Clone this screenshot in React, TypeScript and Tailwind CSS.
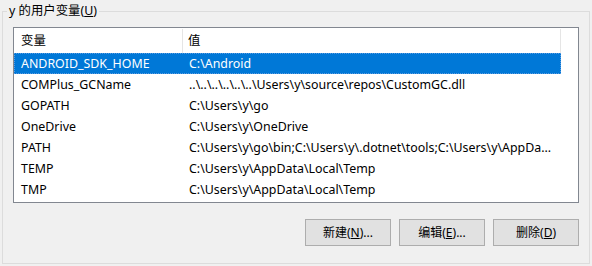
const rows: [string, string][] = [
  ["ANDROID_SDK_HOME", "C:\\Android"],
  ["COMPlus_GCName", "..\\..\\..\\..\\..\\..\\Users\\y\\source\\repos\\CustomGC.dll"],
  ["GOPATH", "C:\\Users\\y\\go"],
  ["OneDrive", "C:\\Users\\y\\OneDrive"],
  ["PATH", "C:\\Users\\y\\go\\bin;C:\\Users\\y\\.dotnet\\tools;C:\\Users\\y\\AppDa..."],
  ["TEMP", "C:\\Users\\y\\AppData\\Local\\Temp"],
  ["TMP", "C:\\Users\\y\\AppData\\Local\\Temp"],
];

function Btn({ label, hot, rest }: { label: string; hot: string; rest: string }) {
  return (
    <button
      type="button"
      className="h-[27px] w-[86px] border border-[#adadad] bg-[#e1e1e1] text-[12px] text-black"
    >
      {label}(<span className="underline">{hot}</span>){rest}
    </button>
  );
}

export default function App() {
  return (
    <div
      className="h-[266px] w-[592px] bg-[#f0f0f0] pl-[2px] pr-[2px] pt-[11px] text-[12.4px] text-black"
      style={{ fontFamily: '"Noto Sans", "Noto Sans CJK SC", sans-serif' }}
    >
      <div className="relative h-[253px] border border-[#dcdcdc]">
        <div className="absolute -top-[9px] left-[4px] bg-[#f0f0f0] px-[2px] leading-[16px]">
          y 的用户变量(<span className="underline">U</span>)
        </div>
        <div className="ml-[10px] mr-[10px] mt-[15px] h-[176px] overflow-hidden border border-[#828790] bg-white">
          <div className="flex h-[25px] items-center pt-px">
            <div className="flex h-full w-[169px] items-center border-r border-[#e5e5e5] pl-[7px]">变量</div>
            <div className="flex h-full w-[378px] items-center border-r border-[#e5e5e5] pl-[5px]">值</div>
          </div>
          {rows.map(([k, v], i) => (
            <div
              key={k}
              className={
                i === 0
                  ? "flex h-[21px] w-[547px] items-center border border-dotted border-[#5a9be0] bg-[#0078d7] pt-px text-white"
                  : "flex h-[21px] w-[547px] items-center border border-transparent pt-px"
              }
            >
              <div className="w-[168px] whitespace-nowrap pl-[6px]">{k}</div>
              <div className="w-[377px] whitespace-nowrap pl-[6px]">{v}</div>
            </div>
          ))}
        </div>
        <div className="mr-[10px] mt-[16px] flex justify-end gap-[8px]">
          <Btn label="新建" hot="N" rest="..." />
          <Btn label="编辑" hot="E" rest="..." />
          <Btn label="删除" hot="D" rest="" />
        </div>
      </div>
    </div>
  );
}
